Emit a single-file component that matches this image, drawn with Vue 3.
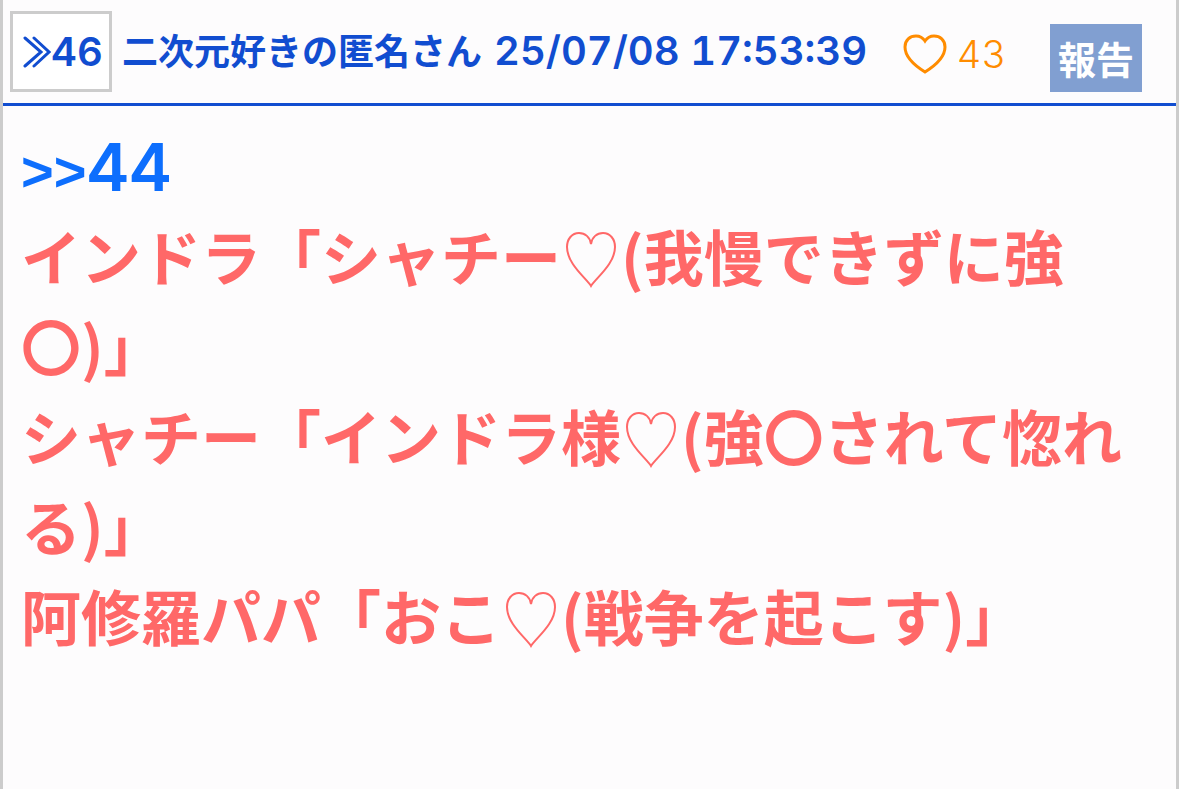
<script setup>
const lines = [
  ['インドラ「シャチー', '(我慢できずに強〇)」'],
  ['シャチー「インドラ様', '(強〇されて惚れる)」'],
  ['阿修羅パパ「おこ', '(戦争を起こす)」'],
]
</script>

<template>
  <article class="post">
    <header class="head">
      <a class="number" href="#46" aria-label="46">
        <svg class="arrows" viewBox="0 0 28 32" aria-hidden="true"><path d="M2 2 18 16 2 30M11 2 26 16 11 30" /></svg>
        <span>46</span>
      </a>
      <span class="name">二次元好きの匿名さん</span>
      <time class="date">25/07/08 17:53:39</time>
      <button class="like" type="button">
        <svg class="like-heart" viewBox="0 0 44 40" aria-hidden="true"><path d="M22 38C14 33 2 24 2 13C2 6 7 2 13 2C17 2 20 4 22 7C24 4 27 2 31 2C37 2 42 6 42 13C42 24 30 33 22 38Z" /></svg>
        <span>43</span>
      </button>
      <button class="report" type="button">報告</button>
    </header>
    <div class="body">
      <a class="reply" href="#44"><span class="quote">&gt;&gt;</span>44</a>
      <p v-for="(line, i) in lines" :key="i" class="line">{{ line[0] }}<svg class="heart" viewBox="0 0 60 60" aria-hidden="true"><path d="M30 57C25 49 6 35 6 18C6 10 11 4 18 4C24 4 29 8 30 15C31 8 36 4 42 4C49 4 54 10 54 18C54 35 35 49 30 57Z" /></svg>{{ line[1] }}</p>
    </div>
  </article>
</template>

<style>
body { background: #fdfcfd; }
</style>
<style scoped>
.post {
  box-sizing: border-box;
  min-height: 100vh;
  border: solid #ccc;
  border-width: 0 3px;
  background: #fdfcfd;
  font-family: "Noto Sans CJK JP", sans-serif;
  font-weight: 700;
}
.head {
  display: flex;
  align-items: flex-start;
  box-sizing: border-box;
  height: 106px;
  padding: 11px 34px 0 7px;
  border-bottom: 3px solid #114dd0;
  color: #114dd0;
  font-size: 36px;
  line-height: 80px;
  white-space: nowrap;
}
.number {
  display: flex;
  align-items: center;
  box-sizing: border-box;
  width: 102px;
  height: 81px;
  padding-left: 10px;
  border: 3px solid #ccc;
  background: #fff;
  color: inherit;
  text-decoration: none;
}
.number, .date, .like, .reply {
  font-family: Inter, "Liberation Sans", sans-serif;
  font-size: 40px;
  font-weight: 600;
  font-variant-numeric: tabular-nums;
}
svg { fill: none; stroke: currentColor; }
.arrows { width: 28px; height: 32px; stroke-width: 3; stroke-linecap: round; }
.name { margin-left: 10px; line-height: 76px; }
.date { margin-left: 12px; }
button { border: 0; font: inherit; }
.like {
  display: flex;
  align-items: center;
  gap: 10px;
  margin-left: auto;
  margin-top: 3px;
  padding: 0;
  background: none;
  color: #ff8c00;
  font-size: 38px;
  font-weight: 300;
}
.like-heart { width: 44px; height: 40px; stroke-width: 3; }
.report {
  height: 68px;
  margin: 13px 0 0 44px;
  padding: 0 8px;
  background: #819fd1;
  color: #fff;
  font-size: 38px;
  line-height: 60px;
}
.body {
  padding: 18px;
  color: #ff6868;
  font-size: 60px;
  line-height: 90px;
}
.reply { display: block; color: #0d6efd; font-size: 66px; line-height: 86px; text-decoration: none; }
.quote { font-family: "Liberation Sans", sans-serif; font-size: 56px; font-weight: 700; line-height: 1; }
.line { margin: 0; line-break: strict; }
.heart { width: 60px; height: 60px; vertical-align: -8px; stroke-width: 2; }
</style>
